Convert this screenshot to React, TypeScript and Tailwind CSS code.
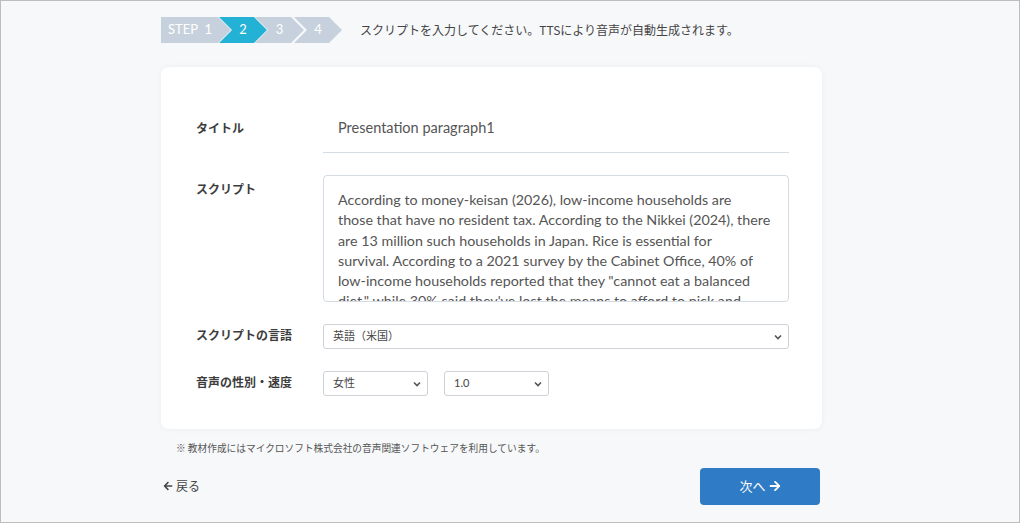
import { FaArrowLeft, FaArrowRight } from "react-icons/fa";

const SCRIPT_LINES = [
  "According to money-keisan (2026), low-income households are",
  "those that have no resident tax. According to the Nikkei (2024), there",
  "are 13 million such households in Japan. Rice is essential for",
  "survival. According to a 2021 survey by the Cabinet Office, 40% of",
  'low-income households reported that they "cannot eat a balanced',
  'diet," while 30% said they\'ve lost the means to afford to pick and',
  "choose what they eat every day.",
];

const JP = '"Noto Sans CJK JP", sans-serif';
const LATIN = 'Lato, "Noto Sans CJK JP", sans-serif';

function Chevron() {
  return (
    <svg
      className="pointer-events-none absolute right-[7px] top-1/2 -translate-y-1/2"
      width="8"
      height="6"
      viewBox="0 0 8 6"
      fill="none"
    >
      <path d="M1 1.5l3 3 3-3" stroke="#555" strokeWidth="1.6" />
    </svg>
  );
}

function Select({ value, className }: { value: string; className: string }) {
  return (
    <div className={`relative ${className}`}>
      <select
        defaultValue={value}
        className="block h-[25px] w-full appearance-none rounded-[3px] border border-[#cfd3d8] bg-white pl-[9px] text-[11px] text-[#444] outline-none"
        style={{ fontFamily: LATIN }}
      >
        <option>{value}</option>
      </select>
      <Chevron />
    </div>
  );
}

function Stepper() {
  return (
    <div className="flex h-[26px] text-[13px] text-white" style={{ fontFamily: LATIN }}>
      <div className="flex w-[70px] items-center justify-center bg-[#c6d1dd] pr-[12px] [clip-path:polygon(0_0,calc(100%_-_13px)_0,100%_50%,calc(100%_-_13px)_100%,0_100%)]">
        STEP&nbsp;&nbsp;1
      </div>
      <div className="-ml-[12px] flex w-[48px] items-center justify-center bg-[#23b1d6] [clip-path:polygon(0_0,calc(100%_-_13px)_0,100%_50%,calc(100%_-_13px)_100%,0_100%,13px_50%)]">
        2
      </div>
      <div className="-ml-[12px] flex w-[49px] items-center justify-center bg-[#c6d1dd] [clip-path:polygon(0_0,calc(100%_-_13px)_0,100%_50%,calc(100%_-_13px)_100%,0_100%,13px_50%)]">
        3
      </div>
      <div className="-ml-[10px] flex w-[48px] items-center justify-center bg-[#c6d1dd] [clip-path:polygon(0_0,calc(100%_-_13px)_0,100%_50%,calc(100%_-_13px)_100%,0_100%,13px_50%)]">
        4
      </div>
    </div>
  );
}

export default function App() {
  return (
    <div className="box-border h-[523px] w-full overflow-hidden border border-[#bdbdbd] bg-[#f7f8fa]">
      <div className="w-[821px] pl-[160px] pt-[16px]">
        <div className="flex items-center">
          <Stepper />
          <p className="ml-[18px] text-[12px] text-[#444]" style={{ fontFamily: JP }}>
            スクリプトを入力してください。TTSにより音声が自動生成されます。
          </p>
        </div>

        <div className="mt-[24px] rounded-[8px] bg-white pb-[33px] pl-[35px] pr-[33px] pt-[35px] shadow-[0_0_6px_rgba(0,0,0,0.05)]">
          <div className="flex items-center">
            <label className="w-[127px] text-[12px] font-bold text-[#3d3d3d]" style={{ fontFamily: JP }}>
              タイトル
            </label>
            <input
              defaultValue="Presentation paragraph1"
              className="h-[51px] flex-1 border-b border-[#d5dbe2] px-[15px] text-[14.5px] text-[#555] outline-none"
              style={{ fontFamily: LATIN }}
            />
          </div>

          <div className="mt-[22px] flex">
            <label className="w-[127px] pt-[5px] text-[12px] font-bold text-[#3d3d3d]" style={{ fontFamily: JP }}>
              スクリプト
            </label>
            <textarea
              readOnly
              wrap="off"
              defaultValue={SCRIPT_LINES.join("\n")}
              className="block h-[127px] flex-1 resize-none overflow-hidden rounded-[4px] border border-[#d5dbe2] pl-[14px] pr-[2px] pt-[14px] text-[14.3px] leading-[20.3px] text-[#555] outline-none"
              style={{ fontFamily: LATIN }}
            />
          </div>

          <div className="mt-[22px] flex items-center">
            <label className="w-[127px] -mt-[4px] text-[12px] font-bold text-[#3d3d3d]" style={{ fontFamily: JP }}>
              スクリプトの言語
            </label>
            <Select value="英語（米国）" className="flex-1" />
          </div>

          <div className="mt-[22px] flex items-center">
            <label className="w-[127px] -mt-[4px] text-[12px] font-bold text-[#3d3d3d]" style={{ fontFamily: JP }}>
              音声の性別・速度
            </label>
            <Select value="女性" className="w-[105px]" />
            <Select value="1.0" className="ml-[16px] w-[105px]" />
          </div>
        </div>

        <p className="mt-[12px] pl-[15px] text-[9.7px] text-[#555]" style={{ fontFamily: JP }}>
          ※ 教材作成にはマイクロソフト株式会社の音声関連ソフトウェアを利用しています。
        </p>

        <div className="mt-[12px] flex items-center justify-between pl-[2px] pr-[2px]">
          <a href="#" className="flex items-center gap-[3px] text-[12px] text-[#444]" style={{ fontFamily: JP }}>
            <FaArrowLeft className="h-[10px] w-[10px]" />
            戻る
          </a>
          <button
            className="flex h-[37px] w-[120px] items-center justify-center gap-[3px] rounded-[4px] bg-[#2f7bc5] text-[13px] text-white"
            style={{ fontFamily: JP }}
          >
            次へ
            <FaArrowRight className="h-[12px] w-[12px]" />
          </button>
        </div>
      </div>
    </div>
  );
}
